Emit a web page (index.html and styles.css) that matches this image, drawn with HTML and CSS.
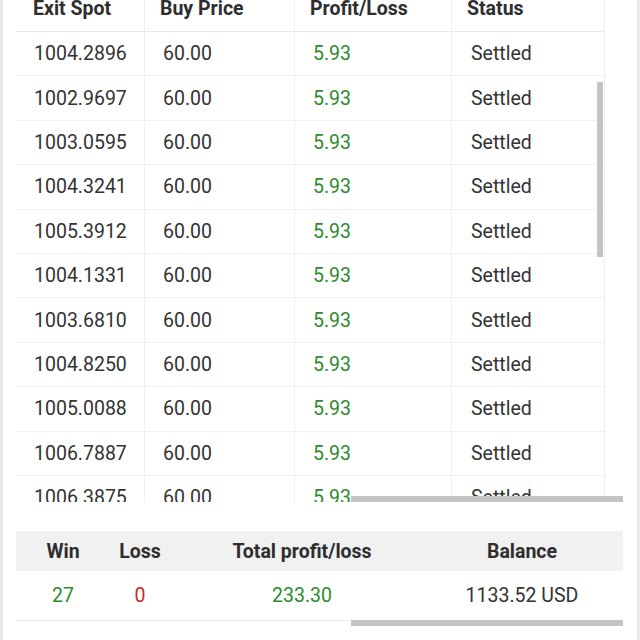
FILE: index.html
```html
<!DOCTYPE html>
<html>
<head>
<meta charset="utf-8">
<link rel="stylesheet" href="styles.css">
</head>
<body>
<div class="page">
  <div class="edge"></div>
  <main class="content">
    <div class="trades">
      <div class="trades-scroll">
        <div class="trow head">
          <div class="cell c1">Exit Spot</div>
          <div class="cell c2">Buy Price</div>
          <div class="cell c3">Profit/Loss</div>
          <div class="cell c4">Status</div>
        </div>
        <div class="trow"><div class="cell c1">1004.2896</div><div class="cell c2">60.00</div><div class="cell c3 pos">5.93</div><div class="cell c4">Settled</div></div>
        <div class="trow"><div class="cell c1">1002.9697</div><div class="cell c2">60.00</div><div class="cell c3 pos">5.93</div><div class="cell c4">Settled</div></div>
        <div class="trow"><div class="cell c1">1003.0595</div><div class="cell c2">60.00</div><div class="cell c3 pos">5.93</div><div class="cell c4">Settled</div></div>
        <div class="trow"><div class="cell c1">1004.3241</div><div class="cell c2">60.00</div><div class="cell c3 pos">5.93</div><div class="cell c4">Settled</div></div>
        <div class="trow"><div class="cell c1">1005.3912</div><div class="cell c2">60.00</div><div class="cell c3 pos">5.93</div><div class="cell c4">Settled</div></div>
        <div class="trow"><div class="cell c1">1004.1331</div><div class="cell c2">60.00</div><div class="cell c3 pos">5.93</div><div class="cell c4">Settled</div></div>
        <div class="trow"><div class="cell c1">1003.6810</div><div class="cell c2">60.00</div><div class="cell c3 pos">5.93</div><div class="cell c4">Settled</div></div>
        <div class="trow"><div class="cell c1">1004.8250</div><div class="cell c2">60.00</div><div class="cell c3 pos">5.93</div><div class="cell c4">Settled</div></div>
        <div class="trow"><div class="cell c1">1005.0088</div><div class="cell c2">60.00</div><div class="cell c3 pos">5.93</div><div class="cell c4">Settled</div></div>
        <div class="trow"><div class="cell c1">1006.7887</div><div class="cell c2">60.00</div><div class="cell c3 pos">5.93</div><div class="cell c4">Settled</div></div>
        <div class="trow"><div class="cell c1">1006.3875</div><div class="cell c2">60.00</div><div class="cell c3 pos">5.93</div><div class="cell c4">Settled</div></div>
      </div>
      <div class="vbar"></div>
      <div class="hbar"></div>
    </div>

    <div class="summary">
      <div class="srow shead">
        <div class="scell">Win</div>
        <div class="scell">Loss</div>
        <div class="scell">Total profit/loss</div>
        <div class="scell">Balance</div>
        <div class="scell"></div>
      </div>
      <div class="srow">
        <div class="scell pos">27</div>
        <div class="scell neg">0</div>
        <div class="scell pos">233.30</div>
        <div class="scell">1133.52 USD</div>
        <div class="scell"></div>
      </div>
      <div class="hbar sbar"></div>
    </div>
  </main>
  <div class="edge right"></div>
</div>
</body>
</html>
```

FILE: styles.css
```css
html, body {
  margin: 0;
  padding: 0;
  background: #ffffff;
}
body {
  font-family: Roboto, "Noto Sans", sans-serif;
  color: #333333;
  width: 640px;
  height: 640px;
  overflow: hidden;
}
.page {
  display: flex;
  height: 640px;
}
.edge {
  width: 3px;
  flex: none;
  background: #e6e6e6;
}
.content {
  flex: 1;
  padding-left: 13px;
  padding-right: 11px;
}
.trades {
  position: relative;
  height: 502px;
  overflow: hidden;
  width: 607px;
}
.trades-scroll {
  margin-top: -14px;
  width: 589px;
}
.trow {
  display: grid;
  grid-template-columns: 129px 150px 157px 153px;
  height: 44.4px;
  box-sizing: border-box;
  border-bottom: 1px solid #efefef;
}
.trow.head {
  height: 46px;
  border-bottom: 1px solid #eaeaea;
}
.cell {
  display: flex;
  align-items: center;
  font-size: 19.5px;
  border-right: 1px solid #efefef;
  padding-left: 18px;
}
.cell.c2 { padding-left: 18px; }
.cell.c3 { padding-left: 18px; }
.cell.c4 { padding-left: 19px; }
.head .cell {
  font-weight: 700;
  color: #2e2e2e;
  padding-left: 17px;
}
.head .cell.c2 { padding-left: 15px; }
.head .cell.c3 { padding-left: 15px; }
.head .cell.c4 { padding-left: 15px; }
.pos { color: #2e8b2e; }
.neg { color: #c62828; }
.vbar {
  position: absolute;
  left: 581px;
  top: 82px;
  width: 6px;
  height: 175px;
  background: #c4c4c4;
}
.hbar {
  position: absolute;
  left: 335px;
  bottom: 0;
  width: 272px;
  height: 6px;
  background: #c4c4c4;
}
.summary {
  position: relative;
  margin-top: 29px;
  width: 607px;
  height: 95px;
}
.srow {
  display: grid;
  grid-template-columns: 94px 60px 264px 176px 1fr;
  height: 40px;
  background: #ffffff;
}
.srow.shead {
  background: #f1f1f1;
  height: 40px;
}
.srow + .srow {
  height: 49px;
  border-bottom: 1px solid #ececec;
}
.scell {
  display: flex;
  align-items: center;
  justify-content: center;
  font-size: 19.5px;
}
.shead .scell {
  font-weight: 700;
  color: #2e2e2e;
}
.sbar {
  bottom: auto;
  top: 89px;
}
.edge.right {
  width: 3px;
  background: #ececec;
}
```
